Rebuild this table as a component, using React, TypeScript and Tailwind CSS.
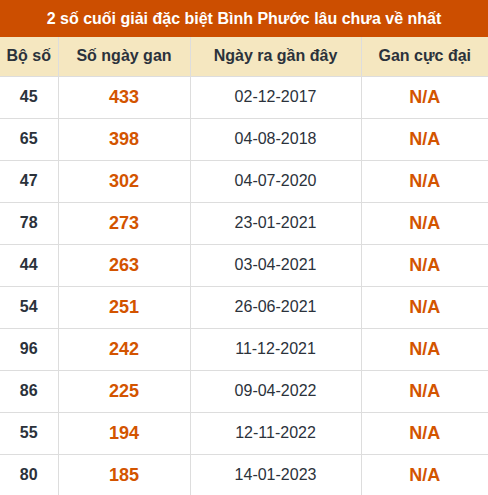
const rows = [
  ['45', '433', '02-12-2017'],
  ['65', '398', '04-08-2018'],
  ['47', '302', '04-07-2020'],
  ['78', '273', '23-01-2021'],
  ['44', '263', '03-04-2021'],
  ['54', '251', '26-06-2021'],
  ['96', '242', '11-12-2021'],
  ['86', '225', '09-04-2022'],
  ['55', '194', '12-11-2022'],
  ['80', '185', '14-01-2023'],
];

export default function App() {
  return (
    <div className="w-[488px] bg-white font-['Liberation_Sans',Arial,sans-serif] text-[#2b323b]">
      <div className="flex h-[37px] items-center justify-center bg-[#cc4e00] text-[16px] font-bold text-white">
        2 số cuối giải đặc biệt Bình Phước lâu chưa về nhất
      </div>
      <table className="w-full table-fixed border-collapse text-center">
        <colgroup>
          <col className="w-[58px]" />
          <col className="w-[132px]" />
          <col className="w-[171px]" />
          <col />
        </colgroup>
        <thead>
          <tr className="h-[39px] bg-[#f5e7c0] text-[16px] font-bold">
            <th className="border-r border-[#dddddd]">Bộ số</th>
            <th className="border-x border-[#dddddd]">Số ngày gan</th>
            <th className="border-x border-[#dddddd]">Ngày ra gần đây</th>
            <th className="border-l border-[#dddddd]">Gan cực đại</th>
          </tr>
        </thead>
        <tbody>
          {rows.map(([num, days, date]) => (
            <tr className="h-[42px] border-t border-[#dddddd]" key={num}>
              <td className="border-r border-[#dddddd] text-[16px] font-bold">{num}</td>
              <td className="border-x border-[#dddddd] text-[18px] font-bold text-[#d35400]">
                {days}
              </td>
              <td className="border-x border-[#dddddd] text-[16px]">{date}</td>
              <td className="border-l border-[#dddddd] text-[18px] font-bold text-[#d35400]">
                N/A
              </td>
            </tr>
          ))}
        </tbody>
      </table>
    </div>
  );
}
